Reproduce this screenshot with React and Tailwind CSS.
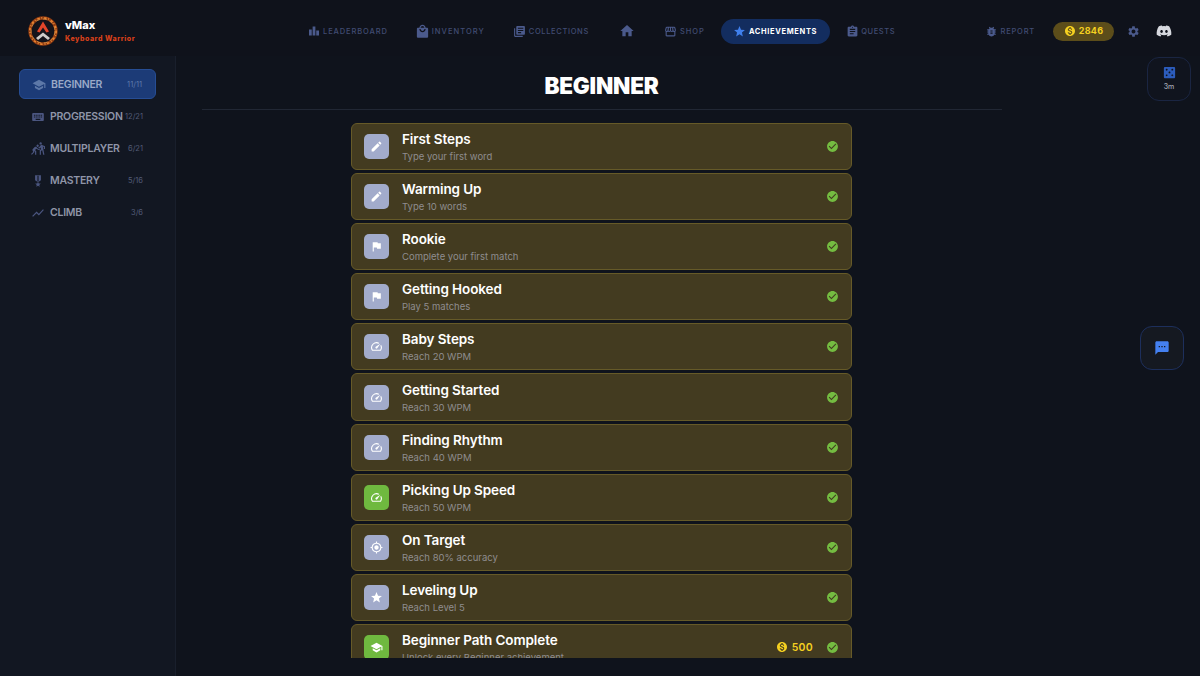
import React from "react";
import {
  MdEdit, MdFlag, MdSpeed, MdGpsFixed, MdStar, MdSchool, MdCheckCircle, MdLeaderboard, MdHome,
  MdStorefront, MdAssignment, MdBugReport, MdSettings, MdSms, MdCasino, MdKeyboard, MdShowChart,
  MdMilitaryTech, MdLocalMall, MdLibraryBooks, MdSportsKabaddi, MdMonetizationOn,
} from "react-icons/md";
import { FaDiscord } from "react-icons/fa";

const font = "font-['Inter','Liberation_Sans',sans-serif]";

const navLeft = [
  { id: "lb", label: "LEADERBOARD", Icon: MdLeaderboard, size: 12, cls: "tracking-[0.9px]" },
  { id: "inv", label: "INVENTORY", Icon: MdLocalMall, size: 15, cls: "tracking-[1.05px]" },
  { id: "col", label: "COLLECTIONS", Icon: MdLibraryBooks, size: 13, cls: "tracking-[0.65px]" },
  { id: "home", label: "", Icon: MdHome, size: 16, cls: "", wrap: "mx-[3px]" },
  { id: "shop", label: "SHOP", Icon: MdStorefront, size: 13, cls: "tracking-[1px]" },
  { id: "ach", label: "ACHIEVEMENTS", Icon: MdStar, size: 13, active: true, cls: "tracking-[0.65px]" },
  { id: "q", label: "QUESTS", Icon: MdAssignment, size: 13, cls: "tracking-[0.6px]" },
];

const side = [
  { label: "BEGINNER", count: "11/11", Icon: MdSchool, active: true },
  { label: "PROGRESSION", count: "12/21", Icon: MdKeyboard },
  { label: "MULTIPLAYER", count: "6/21", Icon: MdSportsKabaddi },
  { label: "MASTERY", count: "5/16", Icon: MdMilitaryTech },
  { label: "CLIMB", count: "3/6", Icon: MdShowChart },
];

const rows = [
  { t: "First Steps", s: "Type your first word", Icon: MdEdit },
  { t: "Warming Up", s: "Type 10 words", Icon: MdEdit },
  { t: "Rookie", s: "Complete your first match", Icon: MdFlag },
  { t: "Getting Hooked", s: "Play 5 matches", Icon: MdFlag },
  { t: "Baby Steps", s: "Reach 20 WPM", Icon: MdSpeed },
  { t: "Getting Started", s: "Reach 30 WPM", Icon: MdSpeed },
  { t: "Finding Rhythm", s: "Reach 40 WPM", Icon: MdSpeed },
  { t: "Picking Up Speed", s: "Reach 50 WPM", Icon: MdSpeed, green: true },
  { t: "On Target", s: "Reach 80% accuracy", Icon: MdGpsFixed },
  { t: "Leveling Up", s: "Reach Level 5", Icon: MdStar },
  { t: "Beginner Path Complete", s: "Unlock every Beginner achievement", Icon: MdSchool, green: true, reward: "500" },
];

function Logo() {
  return (
    <svg width="30" height="30" viewBox="0 0 30 30" className="shrink-0">
      <circle cx="15" cy="15" r="13" fill="none" stroke="#8f3d14" strokeWidth="3.4" />
      <circle cx="15" cy="15" r="13.2" fill="none" stroke="#e8822f" strokeWidth="1.6" strokeDasharray="2.5 1.5 1 2" />
      <circle cx="15" cy="15" r="12" fill="none" stroke="#f4b35a" strokeWidth="0.6" strokeDasharray="4 3" />
      <circle cx="15" cy="15" r="10.8" fill="#15131a" />
      <path d="M15 5.5 L21 15.5 L18.4 16.5 L15 11.5 L11.6 16.5 L9 15.5 Z" fill="#e2452a" />
      <path d="M8 22 L15 16.5 L22 22 L20 24 L15 20 L10 24 Z" fill="#cfccca" />
    </svg>
  );
}

function Row({ t, s, Icon, green, reward }) {
  return (
    <div className="shrink-0 h-[47.1px] rounded-[6px] border border-[#665a28] bg-[#433b20] flex items-center pl-[12px] pr-[12px]">
      <div className={`w-[25px] h-[25px] rounded-[5px] flex items-center justify-center text-white ${green ? "bg-[#6fb93f]" : "bg-[#a2abcb]"}`}>
        <Icon size={13} />
      </div>
      <div className="ml-[13px] flex flex-col flex-1 min-w-0">
        <div className="text-[13.5px] leading-[19px] font-semibold text-white tracking-[-0.1px]">{t}</div>
        <div className="text-[9.5px] leading-[13px] text-[#8f8d8f] mt-[1px]">{s}</div>
      </div>
      {reward && (
        <div className="flex items-center gap-[4px] mr-[13px] text-[#f5d020] text-[10.5px] font-semibold tracking-[0.3px]">
          <MdMonetizationOn size={12} />
          <span>{reward}</span>
        </div>
      )}
      <MdCheckCircle size={13} className="text-[#74bc41]" />
    </div>
  );
}

export default function App() {
  return (
    <div className={`${font} relative w-[1200px] h-[676px] overflow-hidden bg-[#0f131c] flex flex-col`}>
      <header className="h-[56px] shrink-0 flex items-center bg-[#0f121b] pt-[6px]">
        <div className="w-[295px] shrink-0 flex items-center pl-[28px] gap-[7px]">
          <Logo />
          <div className="flex flex-col">
            <span className="text-[11px] leading-[14px] font-extrabold text-white">vMax</span>
            <span className="text-[7px] leading-[13px] font-extrabold text-[#d8401a] tracking-[0.55px]">Keyboard Warrior</span>
          </div>
        </div>
        <nav className="flex items-center gap-[3px]">
          {navLeft.map(({ id, label, Icon, size, active, cls, wrap }) => (
            <div
              key={id}
              className={`h-[25px] px-[13px] flex items-center gap-[3px] rounded-full ${active ? "bg-[#132d5f]" : ""} ${wrap || ""}`}
            >
              <span className="w-[12px] flex items-center justify-center">
                <Icon size={size} className={`shrink-0 ${active ? "text-[#3f7fec]" : "text-[#4b5a8c]"}`} />
              </span>
              {label && (
                <span className={`pt-[1px] text-[7.5px] ${cls} ${active ? "text-white font-bold" : "text-[#414c72] font-medium"}`}>{label}</span>
              )}
            </div>
          ))}
        </nav>
        <div className="ml-auto flex items-center pr-[28px]">
          <div className="flex items-center gap-[3px] mr-[18px]">
            <MdBugReport size={13} className="text-[#4b5a8c]" />
            <span className="pt-[1px] text-[7.5px] font-medium tracking-[0.8px] text-[#414c72]">REPORT</span>
          </div>
          <div className="h-[19px] w-[61px] rounded-full bg-[#5c4d1a] flex items-center justify-center gap-[3px] text-[#f5d020] mr-[13px]">
            <MdMonetizationOn size={12} />
            <span className="text-[9px] font-bold tracking-[0.3px]">2846</span>
          </div>
          <MdSettings size={13} className="text-[#4b5a8c] mr-[16px]" />
          <FaDiscord size={16} className="text-[#d6d8de]" />
        </div>
      </header>

      <div className="flex-1 flex min-h-0">
        <aside className="w-[176px] shrink-0 bg-[#121722] border-r border-[#191f2c] pt-[13px] pl-[19px] pr-[19px]">
          <div className="flex flex-col gap-[2px]">
            {side.map(({ label, count, Icon, active }) => (
              <div
                key={label}
                className={`h-[30px] rounded-[6px] flex items-center pl-[12px] pr-[13px] pt-[1px] ${active ? "bg-[#1c3b77] border border-[#264d94]" : ""}`}
              >
                <Icon size={14} className={`shrink-0 ${active ? "text-[#5d78a8]" : "text-[#4b5680]"}`} />
                <span className={`ml-[5px] text-[10.5px] font-semibold tracking-[-0.25px] ${active ? "text-[#9aa9c7]" : "text-[#8f95a8]"}`}>{label}</span>
                <span className={`ml-auto text-[7.5px] ${active ? "text-[#5c79ab]" : "text-[#525c78]"}`}>{count}</span>
              </div>
            ))}
          </div>
        </aside>

        <main className="flex-1 min-w-0 flex flex-col items-center h-[602px] overflow-hidden pr-[173px]">
          <div className="w-[800px] h-[54px] shrink-0 border-b border-[#212734] flex items-center justify-center">
            <h1 className="text-[22.5px] font-black text-white tracking-[-0.2px] mt-[7px]">BEGINNER</h1>
          </div>
          <div className="w-[501px] mt-[13px] flex flex-col gap-[3px]">
            {rows.map((r) => (
              <Row key={r.t} {...r} />
            ))}
          </div>
        </main>
      </div>

      <div className="absolute left-[1147px] top-[57px] w-[44px] h-[44px] rounded-[12px] border border-[#1a2542] bg-[#10141e] flex flex-col items-center justify-center">
        <MdCasino size={15} className="text-[#2c5cbc]" />
        <span className="text-[7px] font-medium text-[#a2a6b2] mt-[2px]">3m</span>
      </div>
      <div className="absolute left-[1140px] top-[326px] w-[44px] h-[44px] rounded-[12px] border border-[#1d2f5c] bg-[#151921] flex items-center justify-center">
        <MdSms size={16} className="text-[#4480f0]" />
      </div>
    </div>
  );
}
